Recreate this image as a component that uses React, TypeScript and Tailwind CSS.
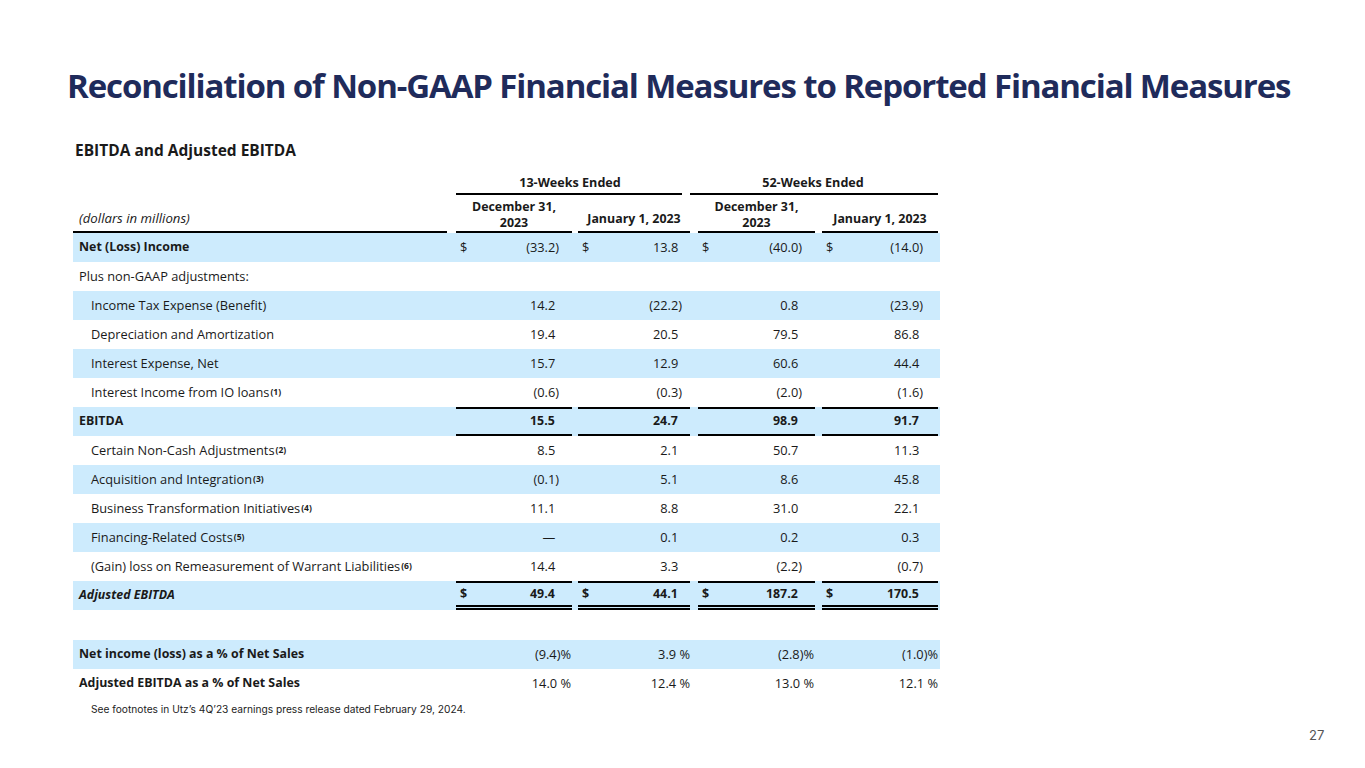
import React from "react";

type Row = {
  label: React.ReactNode;
  vals: string[];
  kind?: "bold" | "italicBold" | "normal";
  boldVals?: boolean;
  indent?: boolean;
  stripe?: boolean;
  dollar?: boolean;
  topLine?: boolean;
  bottomLine?: boolean;
  doubleBottom?: boolean;
  pct?: boolean;
};

const Sup = ({ n }: { n: number }) => (
  <sup className="text-[8.5px] font-bold relative -top-[1px] ml-[1px]">({n})</sup>
);

const rows: Row[] = [
  { label: "Net (Loss) Income", vals: ["(33.2)", "13.8", "(40.0)", "(14.0)"], kind: "bold", stripe: true, dollar: true },
  { label: "Plus non-GAAP adjustments:", vals: ["", "", "", ""] },
  { label: "Income Tax Expense (Benefit)", vals: ["14.2", "(22.2)", "0.8", "(23.9)"], indent: true, stripe: true },
  { label: "Depreciation and Amortization", vals: ["19.4", "20.5", "79.5", "86.8"], indent: true },
  { label: "Interest Expense, Net", vals: ["15.7", "12.9", "60.6", "44.4"], indent: true, stripe: true },
  { label: <>Interest Income from IO loans<Sup n={1} /></>, vals: ["(0.6)", "(0.3)", "(2.0)", "(1.6)"], indent: true },
  { label: "EBITDA", vals: ["15.5", "24.7", "98.9", "91.7"], kind: "bold", boldVals: true, stripe: true, topLine: true, bottomLine: true },
  { label: <>Certain Non-Cash Adjustments<Sup n={2} /></>, vals: ["8.5", "2.1", "50.7", "11.3"], indent: true },
  { label: <>Acquisition and Integration<Sup n={3} /></>, vals: ["(0.1)", "5.1", "8.6", "45.8"], indent: true, stripe: true },
  { label: <>Business Transformation Initiatives<Sup n={4} /></>, vals: ["11.1", "8.8", "31.0", "22.1"], indent: true },
  { label: <>Financing-Related Costs<Sup n={5} /></>, vals: ["—", "0.1", "0.2", "0.3"], indent: true, stripe: true },
  { label: <>(Gain) loss on Remeasurement of Warrant Liabilities<Sup n={6} /></>, vals: ["14.4", "3.3", "(2.2)", "(0.7)"], indent: true },
  { label: "Adjusted EBITDA", vals: ["49.4", "44.1", "187.2", "170.5"], kind: "italicBold", boldVals: true, stripe: true, dollar: true, topLine: true, doubleBottom: true },
];

const pctRows: Row[] = [
  { label: "Net income (loss) as a % of Net Sales", vals: ["(9.4)%", "3.9 %", "(2.8)%", "(1.0)%"], kind: "bold", stripe: true, pct: true },
  { label: "Adjusted EBITDA as a % of Net Sales", vals: ["14.0 %", "12.4 %", "13.0 %", "12.1 %"], kind: "bold", pct: true },
];

const colMr = ["mr-[6px]", "mr-[8px]", "mr-[7px]", "mr-[2px]"];
const colPr = ["pr-[13px]", "pr-[8px]", "pr-[13px]", "pr-[15px]"];
const colPctPr = ["pr-[1px]", "pr-0", "pr-[1px]", "pr-0"];

const grid = "grid grid-cols-[383px_122px_120px_124px_118px]";

function Value({ v, pct }: { v: string; pct?: boolean }) {
  if (pct || v === "" || v.endsWith(")")) return <span>{v}</span>;
  return (
    <span>
      {v}
      <span className="invisible">)</span>
    </span>
  );
}

function TableRow({ r }: { r: Row }) {
  const weight =
    r.kind === "bold"
      ? "font-bold text-[12.4px]"
      : r.kind === "italicBold"
      ? "font-bold italic text-[12.4px]"
      : "font-normal";
  return (
    <div className={`${grid} h-[29px] ${r.stripe ? "bg-[#cdebfd]" : ""}`}>
      <div className={`flex items-center whitespace-nowrap ${r.indent ? "pl-[18px]" : "pl-[6px]"} ${weight}`}>{r.label}</div>
      {r.vals.map((v, i) => (
        <div
          key={i}
          className={`${colMr[i]} flex items-center justify-between pl-[4px] ${r.pct ? colPctPr[i] : colPr[i]} ${
            r.boldVals ? "font-bold text-[12.4px]" : "font-normal"
          } ${r.topLine ? "border-t-2 border-black" : ""} ${r.bottomLine ? "border-b-2 border-black" : ""} ${
            r.doubleBottom ? "border-b-[5px] border-double border-b-black" : ""
          }`}
        >
          <span>{r.dollar ? "$" : ""}</span>
          <Value v={v} pct={r.pct} />
        </div>
      ))}
    </div>
  );
}

export default function App() {
  return (
    <div className="relative w-[1365px] h-[768px] bg-white overflow-hidden">
      <div className="pt-[64px] pl-[67px]">
        <h1 className="font-['Open_Sans',sans-serif] font-bold text-[33px] leading-[44px] tracking-[-0.034em] text-[#1f2b5b] whitespace-nowrap">
          Reconciliation of Non-GAAP Financial Measures to Reported Financial Measures
        </h1>
      </div>

      <div className="pl-[73px] pt-[32px] font-['Open_Sans',sans-serif] text-[12.8px] text-[#1a1a1a]">
        <div className="pl-[2px] text-[15.5px] font-bold leading-[20px]">EBITDA and Adjusted EBITDA</div>

        <div className="mt-[12px] w-[867px]">
          {/* header row 1 */}
          <div className="grid grid-cols-[383px_234px_250px] h-[24px] text-[12.6px]">
            <div />
            <div className="flex flex-col">
              <div className="text-center font-bold leading-[21px] pr-[6px]">13-Weeks Ended</div>
              <div className="border-t-2 border-black mr-[8px]" />
            </div>
            <div className="flex flex-col">
              <div className="text-center font-bold leading-[21px] pr-[4px]">52-Weeks Ended</div>
              <div className="border-t-2 border-black mr-[2px]" />
            </div>
          </div>
          {/* header row 2 */}
          <div className={`${grid} h-[37px]`}>
            <div className="flex items-end">
              <div className="w-[374px] italic pl-[6px] pb-[4px] border-b-2 border-black leading-[18px] text-[13.2px]">
                (dollars in millions)
              </div>
            </div>
            {["December 31,|2023", "January 1, 2023", "December 31,|2023", "January 1, 2023"].map((t, i) => (
              <div key={i} className={`${colMr[i]} border-b-2 border-black font-bold text-[12.4px] flex flex-col justify-end items-center leading-[17px]`}>
                {t.includes("|") ? (
                  <div className="text-center">
                    <div>{t.split("|")[0]}</div>
                    <div className="-mt-[1px]">{t.split("|")[1]}</div>
                  </div>
                ) : (
                  <div className="pb-[4px]">{t}</div>
                )}
              </div>
            ))}
          </div>
          {rows.map((r, i) => (
            <TableRow key={i} r={r} />
          ))}
          <div className="h-[30px]" />
          {pctRows.map((r, i) => (
            <TableRow key={i} r={r} />
          ))}
        </div>

        <div className="pl-[18px] pt-[4px] text-[10.2px] font-['Inter',sans-serif] text-[#222]">
          See footnotes in Utz’s 4Q’23 earnings press release dated February 29, 2024.
        </div>
      </div>

      <div className="absolute left-[1309px] top-[726px] text-[13px] font-['Inter',sans-serif] text-[#555]">27</div>
    </div>
  );
}
